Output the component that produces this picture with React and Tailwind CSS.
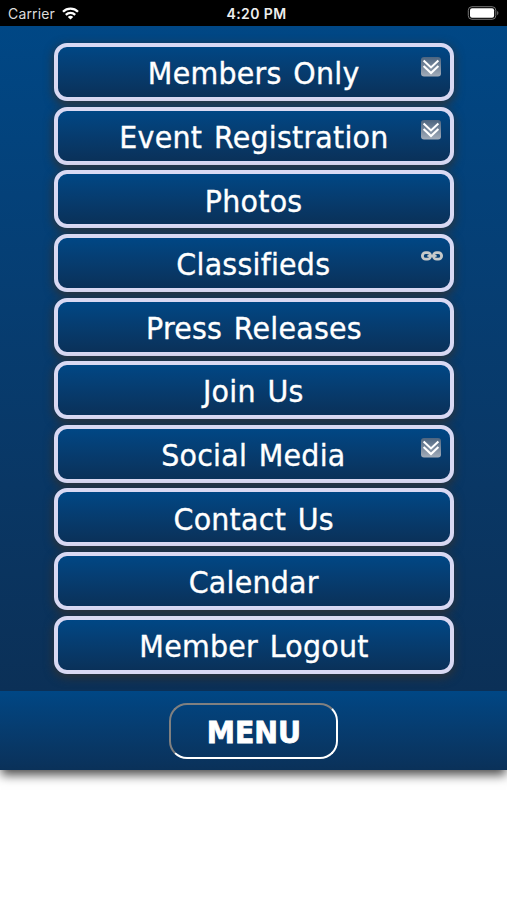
const items = [
  { label: "Members Only", icon: "down" },
  { label: "Event Registration", icon: "down" },
  { label: "Photos" },
  { label: "Classifieds", icon: "link" },
  { label: "Press Releases" },
  { label: "Join Us" },
  { label: "Social Media", icon: "down" },
  { label: "Contact Us" },
  { label: "Calendar" },
  { label: "Member Logout" },
];

function DownIcon() {
  return (
    <svg className="absolute top-[9.5px] right-[8.5px] h-5 w-5" viewBox="0 0 20 20" fill="none">
      <defs>
        <linearGradient id="chip" x1="0" y1="0" x2="0" y2="1">
          <stop offset="0" stopColor="#4d6580" />
          <stop offset="1" stopColor="#a3adba" />
        </linearGradient>
      </defs>
      <rect width="20" height="19.5" rx="3" fill="url(#chip)" />
      <path d="M2.6 3.4 10 10.4 17.4 3.4M2.6 9 10 16 17.4 9" stroke="#fff" strokeWidth="2.1" />
    </svg>
  );
}

function LinkIcon() {
  return (
    <svg className="absolute top-[13.5px] right-[7px] h-[10px] w-[22px]" viewBox="0 0 22 10" fill="none" stroke="#c6c9c9" strokeWidth="2.8">
      <rect x="1.4" y="1.6" width="8.2" height="6.6" rx="3.3" />
      <rect x="12.4" y="1.6" width="8.2" height="6.6" rx="3.3" />
      <path d="M6.4 4.9H15.6" strokeWidth="2" />
    </svg>
  );
}

function StatusBar() {
  return (
    <header className="grid h-[26px] grid-cols-3 items-center bg-black px-2 font-['Inter','Liberation_Sans',sans-serif] text-[13px] text-[#dcdcdc]">
      <div className="flex items-center gap-[7px]">
        <span className="text-[14px] tracking-[0.15px]">Carrier</span>
        <svg className="h-[13px] w-[17px]" viewBox="0 0 17 13" fill="none" stroke="#fff" strokeWidth="2.3">
          <path d="M1 4.8C5.2 .6 11.8 .6 16 4.8M3.8 7.8C6.5 5.2 10.5 5.2 13.2 7.8" />
          <path d="M8.5 12.6 5.8 9.9C7.3 8.5 9.7 8.5 11.2 9.9Z" fill="#fff" stroke="none" />
        </svg>
      </div>
      <span className="pl-[6px] text-center text-[14px] font-semibold tracking-[0.4px] whitespace-nowrap text-[#eee]">4:20 PM</span>
      <svg className="h-[14px] w-[32px] justify-self-end" viewBox="0 0 32 14" fill="none">
        <rect x="1.3" y=".7" width="27.5" height="12.6" rx="3.6" stroke="#777" />
        <rect x="3" y="2.3" width="24.1" height="9.4" rx="2" fill="#fff" />
        <path d="M30.2 5V9.2Q31.4 8.6 31.4 7.1T30.2 5" fill="#777" />
      </svg>
    </header>
  );
}

export default function App() {
  return (
    <div className="h-[900px] w-[507px] overflow-hidden bg-white">
      <StatusBar />
      <div className="shadow-[0_6px_10px_-1px_rgba(0,0,0,0.7)]">
        <main className="flex h-[665px] flex-col items-center gap-[5.6px] bg-linear-to-b from-[#004785] to-[#0b3057] pt-[17.2px] font-['DejaVu_Sans',Verdana,sans-serif]">
          {items.map(({ label, icon }) => (
            <button
              key={label}
              className="relative flex h-[58px] w-[400px] shrink-0 items-center justify-center rounded-[13px] border-4 border-[#d9d9f3] bg-linear-to-b from-[#004785] to-[#0a3159] pt-[4.6px] text-[30px] leading-none whitespace-nowrap text-white shadow-[0_3px_10px_1px_rgba(51,51,51,0.85)]"
            >
              <span className="scale-x-[0.95] pl-[0.3px] tracking-[0.25px] [word-spacing:2.5px] [font-variant-ligatures:none] [-webkit-text-stroke:0.35px_white]">{label}</span>
              {icon === "down" && <DownIcon />}
              {icon === "link" && <LinkIcon />}
            </button>
          ))}
        </main>
        <footer className="flex h-[79px] justify-center bg-linear-to-b from-[#004785] to-[#0a3159] pt-[12px] font-['DejaVu_Sans',Verdana,sans-serif]">
          <button className="flex h-[56px] w-[169px] items-center justify-center rounded-[18px] border-[2.5px] border-t-[#808080] border-r-white border-b-white border-l-[#808080] pt-[4px] text-[30px] leading-none font-bold text-white">
            <span className="scale-x-[0.945] [-webkit-text-stroke:0.8px_white]">MENU</span>
          </button>
        </footer>
      </div>
    </div>
  );
}
